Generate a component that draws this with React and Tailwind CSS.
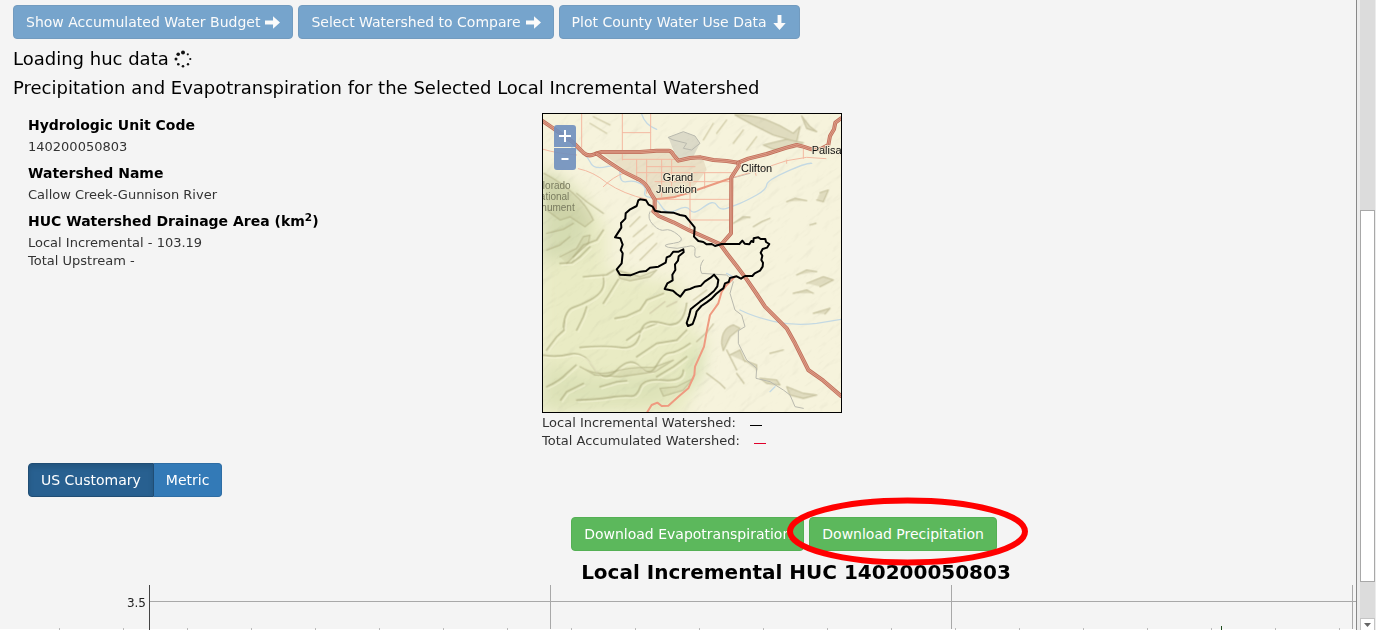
import React from "react";

const FONT = "font-['DejaVu_Sans',Verdana,sans-serif]";

function ArrowRight() {
  return (
    <svg className="size-[15px] shrink-0" viewBox="0 0 14 14" fill="currentColor" aria-hidden="true">
      <path d="M0 5.2h7.500V1.200L14 7l-6.500 5.800V8.800H0z" />
    </svg>
  );
}

function ArrowDown() {
  return (
    <svg className="size-[15px] shrink-0" viewBox="0 0 14 14" fill="currentColor" aria-hidden="true">
      <path d="M5.200 0v7.500H1.200L7 14l5.800-6.500H8.800V0z" />
    </svg>
  );
}

function Spinner() {
  const dots = [
    [9, 2.500, 2],
    [13.800, 4.300, 1.100],
    [16.300, 9, 1.100],
    [14, 14.200, 1.200],
    [9, 16.300, 1.300],
    [4.300, 14.200, 1.300],
    [2, 9, 1.500],
    [4.200, 4.200, 1.800],
  ];
  return (
    <svg className="size-[18px]" viewBox="0 0 18 18" fill="#111" role="img" aria-label="Loading">
      {dots.map(([x, y, r]) => (
        <circle key={`${x}-${y}`} cx={x} cy={y} r={r} />
      ))}
    </svg>
  );
}

function TopButton({ children, icon }) {
  return (
    <button
      type="button"
      disabled
      className="flex h-[34px] items-center gap-[5px] whitespace-nowrap rounded border border-[#2e6da4] bg-[#337ab7] px-3 text-sm text-white opacity-65"
    >
      {children}
      {icon}
    </button>
  );
}

const HIGHWAYS = [
  "M6 32L40 55 98 96 130 128Q145 142 165 132L185 126 300 126 350 122 386 122Q394 122 400 134L415 152 450 144 482 142 520 150 560 153 595 158 625 146 680 132 740 113 770 105 790 110 815 118 842 117 865 105 870 78 882 58 886 38 903 25",
  "M170 131L200 152 250 185 298 209Q322 224 330 246L344 268 344 296 340 304 356 318 400 337 450 362 500 384 540 402 562 432 590 468 620 508 650 552 675 590 740 655 765 700 805 780 850 812 903 858",
  "M595 158L596 168 574 202 573 370 545 402",
];

const MINOR_ROADS =
  "M125 12V112M247 12V150M247 68H332V12M332 68V122M247 148H440M290 148V212M290 188H465M320 148V250M365 148V260M395 150V230M320 170H465M450 188H574M494 188V235M345 268H574M345 270L400 262 452 250M450 330H574M450 188V362M345 215H574M190 230Q220 200 250 190M115 176Q160 185 200 218 250 252 320 268M10 118Q50 130 110 135M574 204L640 185 740 152 800 142 858 146M790 118V145M740 150V160M645 180L648 196";

const BASIN =
  "M300 268L318 271 326 284 338 290 345 302 362 306 400 308 420 315 436 318 450 335 464 352 462 380 475 393 490 396 500 403 515 402 525 408 545 402 598 402 607 392 614 401 628 403 634 393 640 396 641 385 655 382 662 387 676 387 678 396 688 402 681 413 668 417 662 428 667 437 664 450 669 458 668 470 660 482 644 490 637 498 615 498 603 506 590 499 570 504 566 516 555 520 550 535 540 542 528 552 515 566 500 577 484 588 470 604 466 620 458 642 444 648 440 639 447 618 452 598 461 590 480 575 504 558 522 543 532 529 535 510 522 494 512 503 494 515 483 527 466 530 450 537 435 541 421 560 410 552 399 542 374 537 382 520 398 511 397 494 406 480 405 463 414 452 416 439 431 427 430 418 416 425 400 425 390 438 380 442 377 458 355 470 330 473 318 483 300 485 271 496 240 494 230 478 245 460 248 430 242 420 248 404 241 385 225 382 244 353 243 339 256 326 257 310 269 299 290 288 295 271Z";

const RIDGES =
  "M10 735Q50 742 90 732T160 772 230 780 300 770 350 765 390 728 450 700M110 870Q170 868 210 862T270 858 300 832 370 810 430 780M120 712Q190 705 240 712T300 670 370 640 440 580M70 650Q75 600 100 592T150 570 185 540 190 500M225 625L260 618 300 600 320 570 370 550M20 720L50 680 72 660 74 630M20 830Q60 812 80 790L108 765M62 870L80 845 130 820M190 580L215 540 235 508M110 660L130 620 140 590M130 500L200 494 222 480M60 460L95 458 120 440 150 410M100 440L130 405 170 390 190 360M260 690L310 655 350 640M290 740L350 700 410 690 440 660M350 800L400 770 440 740M180 830L230 815 260 812";

const WEST_SHADES =
  "M12 190Q60 215 100 250T160 330L135 350 90 320 60 330 20 300M60 440L110 415 130 380 150 375 145 400 100 440 80 460M20 370L70 358 100 340M20 420L60 405 90 380M110 250L140 275 190 310M120 770Q170 800 220 785T340 772L400 750 345 785 240 800 165 795ZM230 480L300 500 350 480 330 500 270 512 240 505ZM370 858L430 840 460 805 410 830 360 835Z";

const EAST_SHADES =
  "M585 15Q640 15 680 30T760 70L780 50 770 95 700 75 640 45ZM670 105L740 88 790 98 760 112 700 118ZM785 18L810 50 830 65 800 55ZM740 275L765 265 800 272M840 248L865 240 850 275 830 270M640 350L665 335 690 325M580 340L610 320 630 322M810 345L828 340M770 495L800 480 830 485M800 520L850 500 880 510 840 530M760 550L800 540 820 550M820 610L870 595 855 612M545 700Q545 655 580 645L600 655 570 680 550 722ZM570 735L600 720 615 755M610 750L650 765 650 780M660 805L710 810 720 825 680 820ZM740 830L790 850 830 855 790 865 750 855ZM500 790L540 820 555 835M470 695L500 668 520 642M690 730L730 720M560 720L590 780M590 790L612 820";

const RIVERS =
  "M95 112Q140 130 150 155T200 170 240 190 260 215 300 220 315 245 330 262 365 290 410 300 450 300 490 292 530 285 560 295 600 280 650 255 680 225 740 185 815 160M305 12Q315 45 350 58M600 600Q640 620 700 634T830 640L903 628M560 490L578 500M690 845L705 830";

const STREAMS =
  "M490 450Q475 470 485 490L560 495 580 515 570 550 585 600 605 615 615 650 595 662 595 700 620 750 650 775 648 805 690 815 730 840 750 855 765 890 790 895M330 305Q320 325 340 345T375 360 415 375 400 400 385 412 440 410 465 425 480 440M385 82L430 65 465 78 480 100 455 120 430 115 440 100 400 90ZM630 190L574 205";

const LABELS = [
  ["Grand", 368, 214],
  ["Junction", 348, 250],
  ["Clifton", 603, 185],
  ["Palisade", 815, 131],
];

const PARK_LABELS = [
  ["Colorado", 92, 238],
  ["National", 88, 271],
  ["Monument", 104, 302],
];

function WatershedMap() {
  return (
    <div className="relative size-[300px] overflow-hidden border border-black bg-[#f1efd4]">
      <svg className="block size-full" viewBox="9 12 894 894" role="img" aria-label="Watershed map">
        <defs>
          <filter id="relief" x="0" y="0" width="100%" height="100%">
            <feTurbulence type="fractalNoise" baseFrequency="0.014 0.040" numOctaves="4" seed="8" />
            <feDiffuseLighting surfaceScale="6" diffuseConstant="1.3" lightingColor="#ffffff">
              <feDistantLight azimuth="225" elevation="52" />
            </feDiffuseLighting>
          </filter>
          <filter id="soft" x="-20%" y="-20%" width="140%" height="140%">
            <feGaussianBlur stdDeviation="24" />
          </filter>
          <filter id="edge">
            <feGaussianBlur stdDeviation="2" />
          </filter>
        </defs>
        <rect x="9" y="12" width="894" height="894" fill="#f6f3dc" />
        <g filter="url(#soft)">
          <path d="M0 170L110 230 200 350 200 480 420 520 440 640 500 690 430 920 0 920Z" fill="#e9ebc4" />
          <path d="M0 180L60 200 150 320 130 430 0 460Z" fill="#d5dcb2" />
          <path d="M0 760L150 800 400 790 380 880 0 900Z" fill="#dde2b8" />
          <path d="M450 740L490 680 480 800 430 860Z" fill="#cfdcab" />
        </g>
        <path d="M185 128L390 122 420 150 490 148 500 180 465 225 400 262 345 270 320 225 260 185Z" fill="#e8dcc2" opacity=".85" />
        <path d="M385 82L430 65 465 78 480 100 455 150 415 150 400 120Z" fill="#dcdac8" />
        <g transform="rotate(-35 456 459)" opacity=".16" style={{ mixBlendMode: "multiply" }}>
          <rect x="-250" y="-250" width="1400" height="1400" filter="url(#relief)" />
        </g>
        <g fill="none" strokeLinejoin="round" strokeLinecap="round">
          <g filter="url(#edge)">
            <path d={RIDGES} stroke="#a9a77a" strokeWidth="5" opacity=".6" />
            <path d={RIDGES} transform="translate(5 6)" stroke="#f6f5d8" strokeWidth="4" opacity=".6" />
            <path d={WEST_SHADES} fill="#b5b585" fillOpacity=".35" stroke="#a9a77a" strokeWidth="4" opacity=".55" />
            <path d={EAST_SHADES} fill="#b9b48d" fillOpacity=".5" stroke="#b9b48d" strokeWidth="4" opacity=".7" />
            <path
              d="M270 350L300 320M280 380L320 345M290 410L340 370M270 430L300 400M300 450L350 400M460 570L500 540M380 590L410 575M330 610L375 575M560 30L530 70M520 40L490 90M610 60L580 100M650 80L620 120M160 20L210 45M150 40L200 70"
              stroke="#d2cdaa"
              strokeWidth="4"
            />
          </g>
          <path d={STREAMS} stroke="#b9b9ae" strokeWidth="3" />
          <path d={RIVERS} stroke="#c4d9e3" strokeWidth="4" />
          <path d={MINOR_ROADS} stroke="#f3b8a0" strokeWidth="3" />
          <path
            d="M585 500L560 525 545 545 535 580 510 615 500 665 492 710 465 770 463 795 445 835 415 860 385 887 365 888 352 878 335 885 322 906"
            stroke="#ef9a80"
            strokeWidth="6"
          />
          <path d="M345 268L400 262 470 240 574 204" stroke="#ea9a80" strokeWidth="6" />
          {HIGHWAYS.map((d) => (
            <g key={d}>
              <path d={d} stroke="#bf6e5a" strokeWidth="12" />
              <path d={d} stroke="#e0a08a" strokeWidth="7" />
              <path d={d} stroke="#bf6e5a" strokeWidth="2" />
            </g>
          ))}
          <path d={BASIN} stroke="#000" strokeWidth="6" />
        </g>
        <g fontFamily="Liberation Sans, Arial, sans-serif">
          <g fill="#7a7c60" fontSize="30" textAnchor="end">
            {PARK_LABELS.map(([text, x, y]) => (
              <text key={text} x={x} y={y}>
                {text}
              </text>
            ))}
          </g>
          <g fill="#111" fontSize="33" stroke="#f4efd8" strokeWidth="5" paintOrder="stroke">
            {LABELS.map(([text, x, y]) => (
              <text key={text} x={x} y={y}>
                {text}
              </text>
            ))}
          </g>
        </g>
      </svg>
      <div className="absolute left-[11px] top-[11px] flex flex-col gap-px text-white">
        <button
          type="button"
          aria-label="Zoom in"
          className="flex h-[22px] w-[22px] items-center justify-center rounded-t-[3px] bg-[#6f8fbe]/90"
        >
          <svg className="size-3" viewBox="0 0 12 12" fill="none" stroke="currentColor" strokeWidth="2" aria-hidden="true">
            <path d="M6 0v12M0 6h12" />
          </svg>
        </button>
        <button
          type="button"
          aria-label="Zoom out"
          className="flex h-[22px] w-[22px] items-center justify-center rounded-b-[3px] bg-[#6f8fbe]/90"
        >
          <svg className="size-3" viewBox="0 0 12 12" fill="none" stroke="currentColor" strokeWidth="2" aria-hidden="true">
            <path d="M2.500 6h7" />
          </svg>
        </button>
      </div>
    </div>
  );
}

function Info({ title, lines }) {
  return (
    <div className="mb-1">
      <dt className="text-sm leading-[26px] font-bold text-black">{title}</dt>
      {lines.map((line) => (
        <dd key={line} className="leading-[18px]">
          {line}
        </dd>
      ))}
    </div>
  );
}

function Chart() {
  const minor = Array.from({ length: 21 }, (_, i) => 59 + i * 64);
  return (
    <svg className="block w-full" viewBox="0 0 1356 45" role="img" aria-label="Monthly chart">
      <g shapeRendering="crispEdges">
        <path d="M0 44.500H1356" stroke="#fff" />
        <path d="M150 16.500H1356M550.500 0V44M951.500 0V44M1352.500 0V44" stroke="#a8a8a8" />
        <path d="M149.500 0V45" stroke="#444" />
        {minor.map((x) => (
          <path key={x} d={`M${x + 0.5} 43v2`} stroke="#bbb" />
        ))}
        <path d="M1221.500 41v4" stroke="#1d4d1d" />
      </g>
      <text x="146" y="22" textAnchor="end" fontSize="12" fill="#222">
        3.5
      </text>
    </svg>
  );
}

function ScrollRail() {
  return (
    <div className="flex w-5 shrink-0 border-l border-[#888] bg-[#ececec] pl-[3px]" aria-hidden="true">
      <div className="flex w-[15px] flex-col bg-[#dcdcdc]">
        <div className="grow-[211]" />
        <div className="grow-[371] border border-[#a8a8a8] bg-white" />
        <div className="grow-[36]" />
        <div className="flex h-3 items-center justify-center border border-b-0 border-[#c4c4c4] bg-white">
          <svg className="h-1 w-[7px]" viewBox="0 0 7 4" fill="#666">
            <path d="M0 0h7L3.500 4z" />
          </svg>
        </div>
      </div>
    </div>
  );
}

export default function App() {
  return (
    <div className={`flex h-screen overflow-hidden bg-[#f4f4f4] text-[13px] text-[#333] ${FONT}`}>
      <main className="min-w-0 flex-1 overflow-hidden">
        <div className="flex gap-[5px] px-[13px] pt-[5px]">
          <TopButton icon={<ArrowRight />}>Show Accumulated Water Budget</TopButton>
          <TopButton icon={<ArrowRight />}>Select Watershed to Compare</TopButton>
          <TopButton icon={<ArrowDown />}>Plot County Water Use Data</TopButton>
        </div>

        <div className="px-[13px] pt-[5px] text-lg leading-[29px] text-black">
          <p className="flex items-center gap-[5px]">
            Loading huc data <Spinner />
          </p>
          <h1>Precipitation and Evapotranspiration for the Selected Local Incremental Watershed</h1>
        </div>

        <section className="grid grid-cols-[12fr_19fr] pt-[11px] pl-[28px]">
          <dl className="-mt-px">
            <Info title="Hydrologic Unit Code" lines={["140200050803"]} />
            <Info title="Watershed Name" lines={["Callow Creek-Gunnison River"]} />
            <Info
              title={
                <>
                  HUC Watershed Drainage Area (km<sup>2</sup>)
                </>
              }
              lines={["Local Incremental - 103.19", "Total Upstream -"]}
            />
          </dl>
          <div className="w-fit">
            <WatershedMap />
            <ul className="pt-px leading-[18px]">
              <li className="flex items-center gap-[14px]">
                Local Incremental Watershed: <span className="mt-1 h-px w-3 bg-black" />
              </li>
              <li className="flex items-center gap-[14px]">
                Total Accumulated Watershed: <span className="mt-1 h-px w-3 bg-[#e0002a]" />
              </li>
            </ul>
          </div>
        </section>

        <div className="flex px-[28px] pt-[13px] text-sm text-white">
          <button
            type="button"
            aria-pressed="true"
            className="h-[34px] rounded-l border border-[#204d74] bg-[#286090] px-3 shadow-[inset_0_3px_5px_rgba(0,0,0,0.125)]"
          >
            US Customary
          </button>
          <button type="button" aria-pressed="false" className="h-[34px] rounded-r border border-l-0 border-[#2e6da4] bg-[#337ab7] px-3">
            Metric
          </button>
        </div>

        <div className="flex justify-center gap-[5px] pt-5 pl-[212px] text-sm text-white">
          <button type="button" className="h-[34px] rounded border border-[#54b054] bg-[#5cb85c] px-3">
            Download Evapotranspiration
          </button>
          <div className="relative">
            <button type="button" className="h-[34px] rounded border border-[#54b054] bg-[#5cb85c] px-3">
              Download Precipitation
            </button>
            <svg
              className="pointer-events-none absolute -top-5 -left-[22px] h-[69px] w-[241px] max-w-none"
              viewBox="0 0 241 69"
              fill="none"
              aria-hidden="true"
            >
              <ellipse cx="120.500" cy="34.500" rx="117.500" ry="31" stroke="#f00" strokeWidth="6" />
            </svg>
          </div>
        </div>

        <h2 className="pt-2 pl-[236px] text-center text-xl leading-[26px] font-bold text-black">Local Incremental HUC 140200050803</h2>
        <Chart />
      </main>
      <ScrollRail />
    </div>
  );
}
